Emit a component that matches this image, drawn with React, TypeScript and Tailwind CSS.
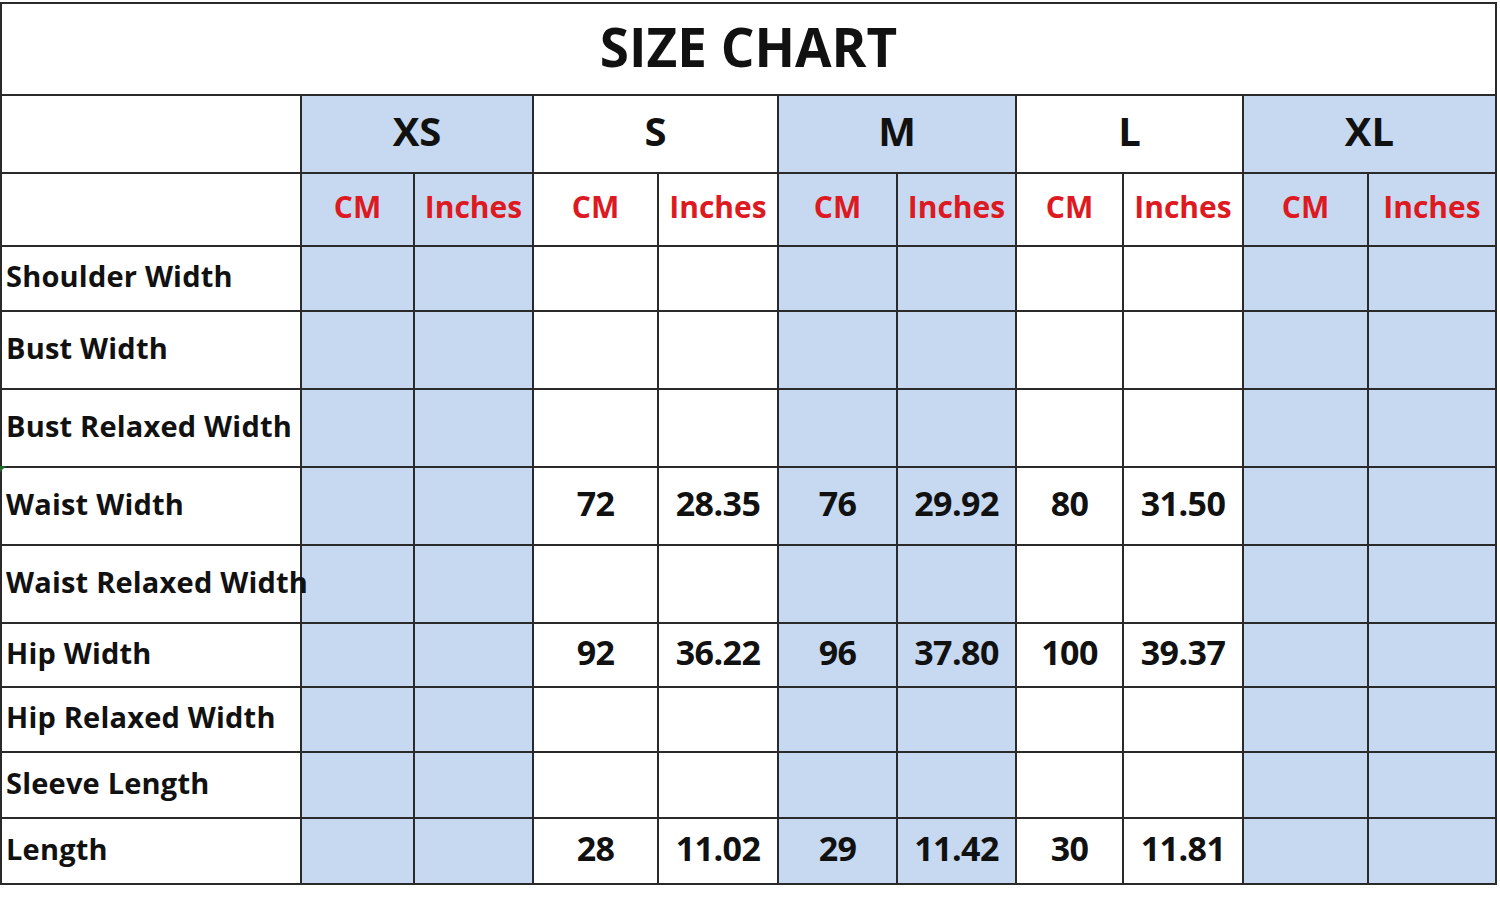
import React from 'react'

type Row = { label: string; values: (string | null)[]; h: string }

const SIZES = ['XS', 'S', 'M', 'L', 'XL']

// column index -> blue fill (XS, M, XL groups)
const blueCol = [true, true, false, false, true, true, false, false, true, true]

const rows: Row[] = [
  { label: 'Shoulder Width', values: [null, null, null, null, null, null, null, null, null, null], h: 'h-[63px]' },
  { label: 'Bust Width', values: [null, null, null, null, null, null, null, null, null, null], h: 'h-[76px]' },
  { label: 'Bust Relaxed Width', values: [null, null, null, null, null, null, null, null, null, null], h: 'h-[76px]' },
  { label: 'Waist Width', values: [null, null, '72', '28.35', '76', '29.92', '80', '31.50', null, null], h: 'h-[76px]' },
  { label: 'Waist Relaxed Width', values: [null, null, null, null, null, null, null, null, null, null], h: 'h-[76px]' },
  { label: 'Hip Width', values: [null, null, '92', '36.22', '96', '37.80', '100', '39.37', null, null], h: 'h-[62px]' },
  { label: 'Hip Relaxed Width', values: [null, null, null, null, null, null, null, null, null, null], h: 'h-[63px]' },
  { label: 'Sleeve Length', values: [null, null, null, null, null, null, null, null, null, null], h: 'h-[64px]' },
  { label: 'Length', values: [null, null, '28', '11.02', '29', '11.42', '30', '11.81', null, null], h: 'h-[64px]' },
]

const font = { fontFamily: '"Open Sans", "Noto Sans", "Liberation Sans", sans-serif' }

export default function App() {
  return (
    <div className="w-[1500px] h-[903px] bg-white overflow-hidden relative" style={font}>
      <div className="mt-[2px] w-[1497px] bg-[#2a2a2a] p-[2px] grid gap-[2px] grid-cols-[298px_111px_117px_123px_118px_117px_117px_105px_118px_123px_126px]">
        {/* title */}
        <div className="col-span-11 h-[90px] bg-white flex items-center justify-center pb-[6px]">
          <span className="text-[53px] font-bold text-[#111] leading-none">SIZE CHART</span>
        </div>

        {/* size row */}
        <div className="h-[76px] bg-white" />
        {SIZES.map((s, i) => (
          <div
            key={s}
            className={`col-span-2 h-[76px] flex items-center justify-center pb-[6px] ${i % 2 === 0 ? 'bg-[#c6d9f0]' : 'bg-white'}`}
          >
            <span className="text-[40px] font-bold text-[#111] leading-none">{s}</span>
          </div>
        ))}

        {/* unit row */}
        <div className="h-[71px] bg-white" />
        {blueCol.map((b, i) => (
          <div
            key={i}
            className={`h-[71px] flex items-center justify-center pb-[6px] ${b ? 'bg-[#c6d9f0]' : 'bg-white'}`}
          >
            <span className="text-[30px] font-bold text-[#dd1a22] leading-none">{i % 2 === 0 ? 'CM' : 'Inches'}</span>
          </div>
        ))}

        {/* data rows */}
        {rows.map((r, ri) => (
          <React.Fragment key={r.label}>
            <div className={`${r.h} bg-white flex items-center pl-[4px] pb-[6px] relative z-10`}>
              <span className="text-[29px] font-bold text-[#111] whitespace-nowrap leading-none tracking-[0.2px]">{r.label}</span>
              {ri === 3 && (
                <span className="absolute left-[-2px] top-[-2px] w-0 h-0 border-t-[6px] border-t-[#1e6b2a] border-r-[6px] border-r-transparent" />
              )}
            </div>
            {r.values.map((v, i) => (
              <div
                key={i}
                className={`${r.h} flex items-center justify-center pb-[6px] ${blueCol[i] ? 'bg-[#c6d9f0]' : 'bg-white'}`}
              >
                {v && <span className="text-[34px] font-bold text-[#111] leading-none tracking-[-0.6px]">{v}</span>}
              </div>
            ))}
          </React.Fragment>
        ))}
      </div>
    </div>
  )
}
